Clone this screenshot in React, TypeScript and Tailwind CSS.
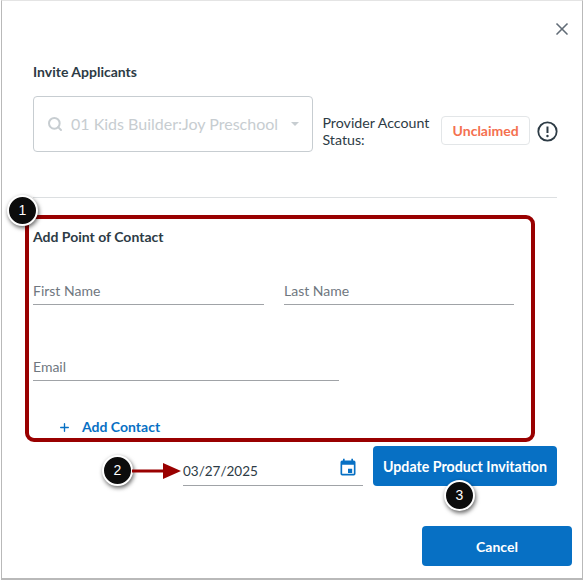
import { Search, Plus, X } from "lucide-react";

const font = { fontFamily: "Lato, sans-serif" };

function Callout({ n, className }: { n: number; className: string }) {
  return (
    <div
      className={`absolute flex h-[31px] w-[31px] items-center justify-center rounded-full border-2 border-white bg-[#0c0c0c] text-[14px] text-white shadow-[1px_2px_4px_rgba(0,0,0,0.6)] ${className}`}
      style={{ fontFamily: "Liberation Sans, sans-serif" }}
    >
      {n}
    </div>
  );
}

function Field({ label, className }: { label: string; className: string }) {
  return (
    <div className={`h-[24px] border-b border-[#a0a3a7] text-[14px] leading-[20px] text-[#6f7780] ${className}`}>
      {label}
    </div>
  );
}

export default function App() {
  return (
    <div className="relative h-[582px] w-[584px] overflow-hidden bg-white" style={font}>
      <div className="ml-px h-[580px] w-[582px] border-x border-b-2 border-[#b9b9b9] border-t border-t-[#e4e4e4] pl-[31px] pr-[24px]">
        {/* close */}
        <div className="flex h-[61px] justify-end">
          <X className="mr-[-14px] mt-[18px] h-[20px] w-[20px] text-[#616c77]" strokeWidth={2} />
        </div>

        <div className="text-[14px] font-bold leading-[20px] text-[#2d3b45]">Invite Applicants</div>

        <div className="mt-[14px] flex items-center">
          <div className="flex h-[56px] w-[281px] items-center rounded border border-[#c7cdd1] pl-[13px] pr-[13px]">
            <Search className="h-[16px] w-[16px] text-[#c7cdd1]" strokeWidth={3} />
            <span className="ml-[8px] flex-1 whitespace-nowrap text-[16px] text-[#c7cdd1]">01 Kids Builder:Joy Preschool</span>
            <span className="h-0 w-0 border-x-[4px] border-t-[4px] border-x-transparent border-t-[#c7cdd1]" />
          </div>
          <div className="ml-[9px] mt-[14px] w-[119px] text-[14.2px] leading-[17px] text-[#2d3b45]">
            Provider Account Status:
          </div>
          <div className="mt-[13px] flex h-[29px] w-[89px] items-center justify-center rounded border border-[#e3e6e8] text-[14px] font-bold text-[#f4704f]">
            Unclaimed
          </div>
          <svg className="ml-[7px] mt-[14px] h-[21px] w-[21px]" viewBox="0 0 21 21" fill="none">
            <circle cx="10.5" cy="10.5" r="9.2" stroke="#2d3b45" strokeWidth="1.8" />
            <path d="M10.5 5.5v6.5" stroke="#2d3b45" strokeWidth="2" />
            <circle cx="10.5" cy="15" r="1.2" fill="#2d3b45" />
          </svg>
        </div>

        <div className="mt-[45px] h-px w-[524px] bg-[#dcdfe1]" />

        {/* point of contact */}
        <div className="ml-[-8px] mt-[17px] h-[227px] w-[510px] rounded-[9px] border-[4px] border-[#990000] pl-[4px]">
          <div className="mt-[8px] text-[14px] font-bold leading-[20px] text-[#2d3b45]">Add Point of Contact</div>
          <div className="mt-[34px] flex gap-[20px]">
            <Field label="First Name" className="w-[231px]" />
            <Field label="Last Name" className="w-[230px]" />
          </div>
          <Field label="Email" className="mt-[52px] w-[306px]" />
          <div className="ml-[25px] mt-[37px] flex items-center">
            <Plus className="h-[13px] w-[13px] text-[#0770c4]" strokeWidth={2.5} />
            <span className="ml-[11px] text-[14px] font-bold leading-[18px] text-[#0770c4]">Add Contact</span>
          </div>
        </div>

        {/* date and update */}
        <div className="mt-[4px] flex items-start">
          <div className="ml-[150px] mt-[11px] flex h-[29px] w-[180px] items-start justify-between border-b border-[#a0a3a7] pr-[5px]">
            <span className="mt-[4px] text-[13.5px] leading-[20px] text-[#2d3b45]">03/27/2025</span>
            <svg className="mt-px h-[20px] w-[20px]" viewBox="0 0 24 24" fill="#0770c4">
              <path d="M19 3h-1V1h-2v2H8V1H6v2H5a2 2 0 0 0-2 2v14a2 2 0 0 0 2 2h14a2 2 0 0 0 2-2V5a2 2 0 0 0-2-2zm0 16H5V8h14v11zm-7-6h5v5h-5v-5z" />
            </svg>
          </div>
          <button className="ml-[10px] flex h-[40px] w-[184px] items-center justify-center rounded bg-[#0770c4] pt-px text-[14.2px] font-bold text-white">
            Update Product Invitation
          </button>
        </div>

        <div className="mt-[40px] flex justify-end">
          <button className="mr-[-14px] flex h-[40px] w-[150px] items-center justify-center rounded bg-[#0770c4] text-[14px] font-bold text-white">
            Cancel
          </button>
        </div>
      </div>

      {/* annotations */}
      <Callout n={1} className="left-[7px] top-[195px]" />
      <Callout n={2} className="left-[102px] top-[455px]" />
      <Callout n={3} className="left-[444px] top-[480px]" />
      <svg className="absolute left-[131px] top-[462px] h-[18px] w-[52px]" viewBox="0 0 52 18">
        <path d="M1 7.5h34v3H1z" fill="#990000" />
        <path d="M32 1l18 8-18 8z" fill="#990000" />
      </svg>
    </div>
  );
}
